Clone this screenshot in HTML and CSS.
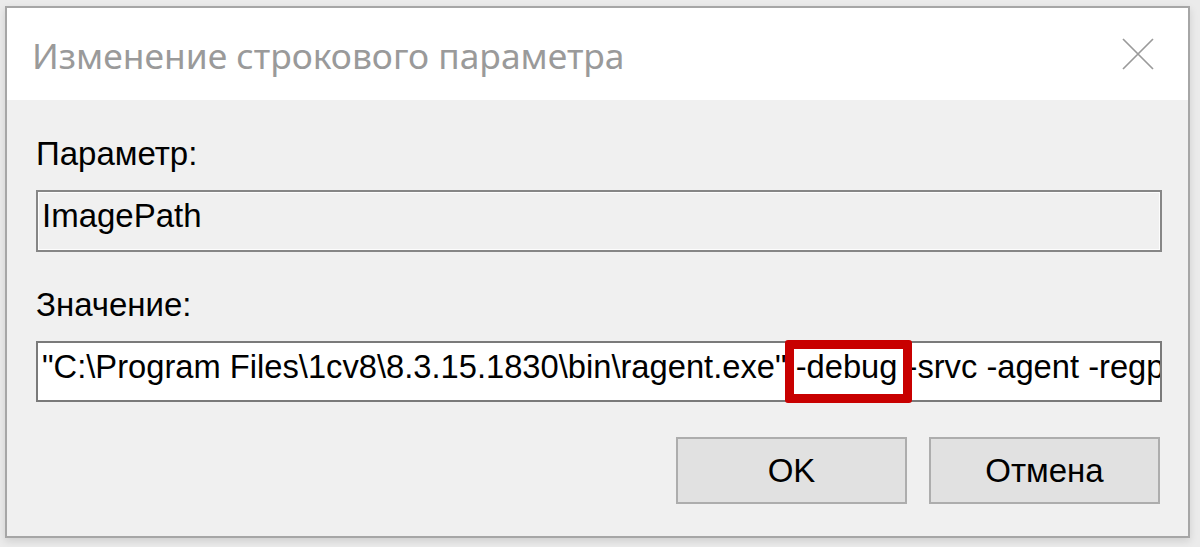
FILE: index.html
```html
<!DOCTYPE html>
<html lang="ru">
<head>
    <meta charset="UTF-8">
    <meta name="viewport" content="width=device-width, initial-scale=1.0">
    <title>Изменение строкового параметра</title>
    <link rel="stylesheet" href="styles.css">
</head>
<body>
    <div class="dialog">
        <div class="titlebar">
            <span class="title">Изменение строкового параметра</span>
            <svg class="close" width="32" height="32" viewBox="0 0 32 32">
                <path d="M1 1 L31 31 M31 1 L1 31" stroke="#9a9a9a" stroke-width="1.7" fill="none"/>
            </svg>
        </div>

        <div class="content">
            <label class="label">Параметр:</label>
            <div class="field field-readonly">ImagePath</div>

            <label class="label label-value">Значение:</label>
            <div class="value-wrap">
                <div class="field field-value">"C:\Program Files\1cv8\8.3.15.1830\bin\ragent.exe" -debug -srvc -agent -regport 1541 -port 1540 -range 1560:1591 -d "C:\Program Files\1cv8\srvinfo"</div>
                <span class="mark"></span>
            </div>

            <div class="buttons">
                <button class="btn">OK</button>
                <button class="btn">Отмена</button>
            </div>
        </div>
    </div>
</body>
</html>
```

FILE: styles.css
```css
body {
    margin: 0;
    background: #ebebeb;
    font-family: "Liberation Sans", Arial, sans-serif;
    color: #000;
    width: 1200px;
    height: 547px;
    overflow: hidden;
}
.dialog {
    margin: 6px 0 0 5px;
    width: 1185px;
    height: 532px;
    box-sizing: border-box;
    border: 2px solid #a6a6a6;
    background: #f0f0f0;
    box-shadow: 0 3px 8px rgba(0, 0, 0, 0.12);
    display: flex;
    flex-direction: column;
}
.titlebar {
    height: 92px;
    background: #fff;
    display: flex;
    align-items: center;
    justify-content: space-between;
    padding: 0 34px 0 25px;
}
.title {
    font-family: "Noto Sans", "Open Sans", sans-serif;
    font-size: 35.4px;
    color: #9a9a9a;
    margin-top: 2px;
}
.close {
    display: block;
    margin-top: -1px;
}
.content {
    padding: 35px 26px 32px 29px;
    display: flex;
    flex-direction: column;
}
.label {
    font-size: 33px;
    line-height: 38px;
    height: 38px;
}
.label-value {
    margin-top: 34px;
}
.field {
    margin-top: 17px;
    height: 62px;
    box-sizing: border-box;
    border: 2px solid #868686;
    padding: 5px 6px 0 4px;
    font-size: 33px;
    line-height: 38px;
    white-space: nowrap;
    overflow: hidden;
}
.field-readonly {
    background: #f0f0f0;
    box-shadow: inset 0 0 0 1px #fdfdfd;
}
.value-wrap {
    position: relative;
    margin-top: 17px;
}
.field-value {
    margin-top: 0;
    height: 61px;
    background: #fff;
    border-color: #7a7a7a;
    font-size: 32.7px;
    padding-top: 5px;
}
.mark {
    position: absolute;
    left: 749px;
    top: -1px;
    width: 127px;
    height: 63px;
    box-sizing: border-box;
    border: 9px solid #c80000;
    border-radius: 3px;
}
.buttons {
    margin-top: 35px;
    display: flex;
    justify-content: flex-end;
    gap: 22px;
    padding-right: 2px;
}
.btn {
    width: 231px;
    height: 67px;
    box-sizing: border-box;
    border: 2px solid #adadad;
    background: #e1e1e1;
    font-family: "Liberation Sans", Arial, sans-serif;
    font-size: 33px;
    color: #000;
    padding: 0;
}
```
